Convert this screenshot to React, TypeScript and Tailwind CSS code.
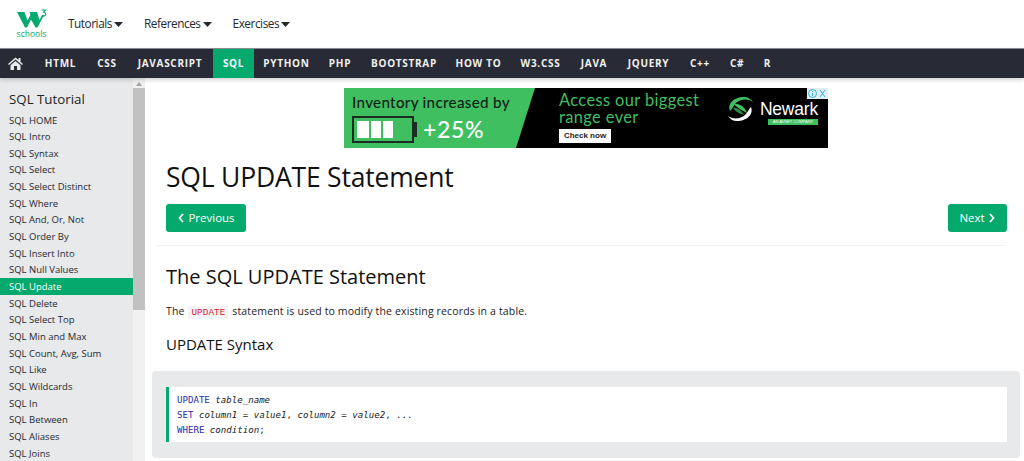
import {FC} from 'react';

const topLinks = ['Tutorials', 'References', 'Exercises'];
const navLinks = [
  {label: 'HTML', width: 'w-[53px]'},
  {label: 'CSS', width: 'w-[40px]'},
  {label: 'JAVASCRIPT', width: 'w-[86px]'},
  {label: 'SQL', width: 'w-[41px]'},
  {label: 'PYTHON', width: 'w-[65px]'},
  {label: 'PHP', width: 'w-[42px]'},
  {label: 'BOOTSTRAP', width: 'w-[86px]'},
  {label: 'HOW TO', width: 'w-[63px]'},
  {label: 'W3.CSS', width: 'w-[61px]'},
  {label: 'JAVA', width: 'w-[46px]'},
  {label: 'JQUERY', width: 'w-[63px]'},
  {label: 'C++', width: 'w-[40px]'},
  {label: 'C#', width: 'w-[34px]'},
  {label: 'R', width: 'w-[27px]'},
];
const sideLinks = [
  'SQL HOME', 'SQL Intro', 'SQL Syntax', 'SQL Select', 'SQL Select Distinct', 'SQL Where', 'SQL And, Or, Not',
  'SQL Order By', 'SQL Insert Into', 'SQL Null Values', 'SQL Update', 'SQL Delete', 'SQL Select Top', 'SQL Min and Max',
  'SQL Count, Avg, Sum', 'SQL Like', 'SQL Wildcards', 'SQL In', 'SQL Between', 'SQL Aliases', 'SQL Joins',
];

const Logo: FC = () => (
  <div className="flex flex-col items-center w-[31px] ml-[16px]">
    <svg width="31" height="19" viewBox="0 0 31 19">
      <path d="M1 3h7.500l3 8.500L14.500 6 13.500 3h7.500l2.500 8 2.500-5h2L21.500 18.500h-2L15 10.500 11 18.500H9z" fill="#04aa6d" />
      <path d="M25.500 1h4l-2 2.200c1.600.2 2.300 1 2.300 2 0 1.500-1.500 2.300-4 1.800" fill="none" stroke="#04aa6d" strokeWidth="1.100" />
    </svg>
    <span className="text-[8.500px] leading-[10px] font-medium text-[#04aa6d] mt-[1px]">schools</span>
  </div>
);

const Ad: FC = () => (
  <div className="relative flex w-[484px] h-[60px] bg-black overflow-hidden">
    <svg className="absolute inset-0" width="484" height="60" viewBox="0 0 484 60">
      <polygon points="0,0 191,0 172,60 0,60" fill="#40bf60" />
    </svg>
    <div className="relative w-[215px] pl-[8px] pt-[4px] font-['Lato',sans-serif]">
      <div className="text-[15.200px] leading-[20px] font-medium text-[#10201a] tracking-[0.3px] whitespace-nowrap">Inventory increased by</div>
      <div className="flex items-center gap-[6px] mt-[4px]">
        <div className="flex items-center">
          <div className="flex gap-[2px] w-[62px] h-[27px] border-2 border-[#1d2b24] p-[3px] pr-[1px]">
            <div className="w-[12px] bg-white" />
            <div className="w-[10px] bg-white" />
            <div className="w-[10px] bg-white" />
          </div>
          <div className="w-[3px] h-[15px] bg-[#1d2b24]" />
        </div>
        <span className="text-[23px] leading-[27px] font-medium text-white tracking-[0.700px]">+25%</span>
      </div>
    </div>
    <div className="relative flex flex-col w-[167px] pt-[3px] font-['Lato',sans-serif]">
      <div className="text-[16.400px] leading-[17px] text-[#40bf60] tracking-[0.4px] whitespace-nowrap">Access our biggest<br />range ever</div>
      <div className="mt-[4px] w-[52px] h-[14px] bg-white text-[8px] leading-[14px] text-center font-semibold text-[#222] font-['Liberation_Sans',sans-serif]">Check now</div>
    </div>
    <div className="relative mt-[7px] flex items-start gap-[5px]">
      <svg width="29" height="28" viewBox="0 0 29 28">
        <path d="M4 16C1 8 9 2 18 2c4 0 7 2 9 5C22 3 13 4 9 9c-2 3-3 5-5 7z" fill="#40bf60" />
        <path d="M25 12c3 8-5 14-14 14-4 0-7-2-9-5 5 4 14 3 18-2 2-3 3-5 5-7z" fill="#fff" />
        <path d="M8 9c5-1 11 3 13 9-4-2-10-5-13-9z" fill="#40bf60" />
        <path d="M7 13c4-1 8 2 11 7-4-1-8-3-11-7z" fill="#2d8a47" />
      </svg>
      <div className="flex flex-col items-end w-[58px]">
        <span className="text-[17.500px] leading-[28px] text-white font-['Liberation_Sans',sans-serif] tracking-[-0.2px]">Newark</span>
        <span className="w-[50px] h-[6px] mt-[-4px] bg-[#40bf60] text-[4px] leading-[6px] text-center text-white font-['Liberation_Sans',sans-serif] whitespace-nowrap">AN AVNET COMPANY</span>
      </div>
    </div>
    <div className="absolute right-0 top-0 flex w-[21px] h-[11px] bg-[#e4eef2]">
      <svg width="21" height="11" viewBox="0 0 21 11">
        <circle cx="5.500" cy="5.500" r="4" fill="none" stroke="#29b6e0" strokeWidth="1" />
        <path d="M5.500 3v1M5.500 5v3" stroke="#29b6e0" strokeWidth="1" />
        <path d="M13 2l5 7M18 2l-5 7" stroke="#29b6e0" strokeWidth="1" />
      </svg>
    </div>
  </div>
);

function Chevron({left}: {left?: boolean}) {
  return (
    <svg width="6" height="10" viewBox="0 0 6 10" className="mx-[1px]">
      <path d={left ? 'M5 1 1.500 5 5 9' : 'M1 1l3.500 4L1 9'} fill="none" stroke="#fff" strokeWidth="1.800" />
    </svg>
  );
}

const App: FC = () => (
  <div className="h-[461px] w-[1024px] overflow-hidden bg-white font-['Open_Sans',sans-serif] text-black">
    <header className="h-[48px] flex items-center">
      <Logo />
      <div className="flex ml-[21px] gap-[21px]">
        {topLinks.map(t => (
          <span key={t} className="flex items-center gap-[2px] text-[11.800px] tracking-[-0.450px] text-[#25282f]">
            {t}
            <svg width="9" height="5" viewBox="0 0 9 5"><polygon points="0,0 9,0 4.500,5" fill="#25282f" /></svg>
          </span>
        ))}
      </div>
    </header>

    <nav className="relative h-[30px] flex items-stretch bg-[#282a35] border-t border-[#8a8b90] shadow-[0_2px_4px_rgba(0,0,0,0.18)]">
      <div className="w-[34px] flex items-center pl-[8px]">
        <svg width="15" height="13" viewBox="0 0 15 13">
          <path d="M7.500 0.500 0 7l1 1 6.500-5.500L14 8l1-1-2.500-2.200V1h-2v2zM2.500 8.200V13h3.500V9h3v4h3.500V8.200L7.500 4z" fill="#e7e9eb" />
        </svg>
      </div>
      {navLinks.map(n => (
        <span
          key={n.label}
          className={`flex items-center justify-center ${n.width} text-[10px] font-bold tracking-[0.7px] whitespace-nowrap ${n.label === 'SQL' ? 'bg-[#04aa6d] text-white' : 'text-[#f1f1f1]'}`}
        >
          {n.label}
        </span>
      ))}
    </nav>

    <div className="flex h-[383px]">
      <aside className="w-[133px] shrink-0 bg-[#e7e9eb] pt-[12px] overflow-hidden">
        <h2 className="px-[9px] text-[13.300px] leading-[18px] text-[#222]">SQL Tutorial</h2>
        <ul className="mt-[3.500px]">
          {sideLinks.map(s => (
            <li
              key={s}
              className={`h-[16.670px] px-[9px] text-[9.500px] leading-[18px] whitespace-nowrap ${s === 'SQL Update' ? 'bg-[#04aa6d] text-white' : 'text-[#25282f]'}`}
            >
              {s}
            </li>
          ))}
        </ul>
      </aside>

      <div className="w-[12px] shrink-0 bg-[#f1f1f1] flex flex-col items-center">
        <svg className="mt-[4px]" width="6" height="4" viewBox="0 0 6 4"><polygon points="3,0 6,4 0,4" fill="#a3a3a3" /></svg>
        <div className="w-full h-[222px] mt-[2px] bg-[#c1c1c1]" />
      </div>

      <main className="flex-1 min-w-0 pl-[7px] pr-[4px] pt-[10px]">
        <div className="flex justify-center">
          <Ad />
        </div>

        <div className="px-[14px]">
          <h1 className="mt-[9px] text-[26.500px] leading-[40px] tracking-[-0.2px] text-[#111]">SQL UPDATE Statement</h1>
          <div className="flex justify-between mt-[7px] -mr-[1px]">
            <span className="flex items-center justify-center gap-[3px] w-[80px] h-[28px] rounded-[3px] bg-[#04aa6d] text-[11.500px] font-medium text-white">
              <Chevron left />Previous
            </span>
            <span className="flex items-center justify-center gap-[3px] w-[59px] h-[28px] rounded-[3px] bg-[#04aa6d] text-[11.500px] font-medium text-white">
              Next<Chevron />
            </span>
          </div>
        </div>

        <hr className="mt-[13px] border-[#f1f1f1] mr-[14px] ml-[3px]" />

        <div className="px-[14px]">
          <h2 className="mt-[16px] text-[20px] leading-[30px] text-[#111]">The SQL UPDATE Statement</h2>
          <p className="mt-[11px] text-[10.500px] leading-[16px] tracking-[0.15px] text-[#222]">
            The <code className="mx-[1px] bg-[#f4f4f4] px-[3px] py-[1px] text-[9.200px] font-['Liberation_Mono',monospace] text-[#dc143c]">UPDATE</code> statement is used to modify the existing records in a table.
          </p>
          <h3 className="mt-[12px] text-[15px] leading-[22px] text-[#111]">UPDATE Syntax</h3>
        </div>

        <div className="mt-[16px] h-[87px] rounded-[4px] bg-[#e7e9eb] pt-[16px] pl-[14px] pr-[13px]">
          <div className="h-[55px] bg-white border-l-[3px] border-[#04aa6d] pl-[8px] pt-[6px] font-['DejaVu_Sans_Mono',monospace] text-[9.100px] leading-[15px] text-[#222] whitespace-pre">
            <div><span className="text-[#2a2ab0]">UPDATE</span> <i>table_name</i></div>
            <div><span className="text-[#2a2ab0]">SET</span> <i>column1</i> = <i>value1</i>, <i>column2</i> = <i>value2</i>, ...</div>
            <div><span className="text-[#2a2ab0]">WHERE</span> <i>condition</i>;</div>
          </div>
        </div>
      </main>
    </div>
  </div>
);

export default App;
